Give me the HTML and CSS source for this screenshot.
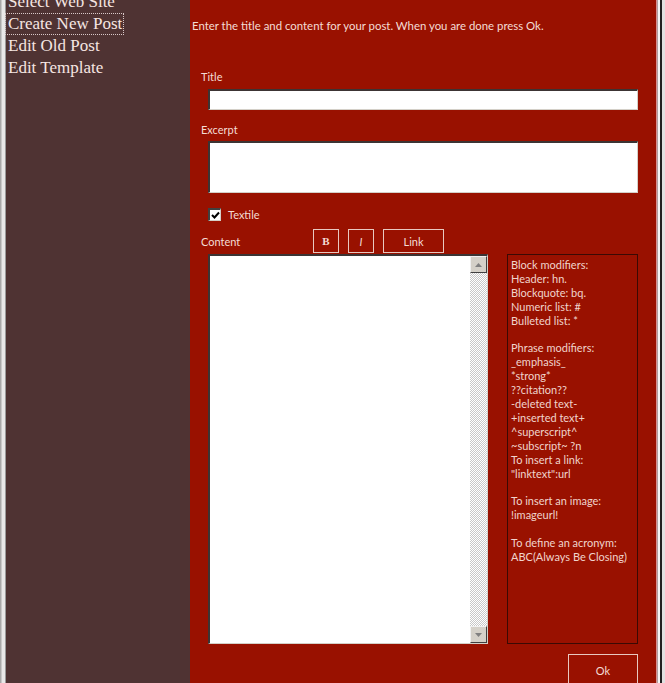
FILE: index.html
```html
<!DOCTYPE html>
<html>
<head>
<meta charset="utf-8">
<link rel="stylesheet" href="styles.css">
</head>
<body>
<div class="page">
  <div class="edge-left"></div>
  <nav class="sidebar">
    <a class="nav-item">Select Web Site</a>
    <a class="nav-item nav-focus">Create New Post</a>
    <a class="nav-item">Edit Old Post</a>
    <a class="nav-item">Edit Template</a>
  </nav>
  <main class="main">
    <p class="intro">Enter the title and content for your post. When you are done press Ok.</p>
    <div class="label label-title">Title</div>
    <div class="field field-title"></div>
    <div class="label label-excerpt">Excerpt</div>
    <div class="field field-excerpt"></div>
    <div class="check-row">
      <span class="checkbox"><svg width="9" height="9" viewBox="0 0 9 9"><path d="M1 4 L3.5 6.5 L8 1.5" fill="none" stroke="#000" stroke-width="2"/></svg></span>
      <span class="check-label">Textile</span>
    </div>
    <div class="toolbar">
      <div class="label label-content">Content</div>
      <div class="btn btn-b">B</div>
      <div class="btn btn-i">I</div>
      <div class="btn btn-link">Link</div>
    </div>
    <div class="editor">
      <div class="field field-content">
        <div class="scroll">
          <div class="sbtn"><svg width="7" height="4" viewBox="0 0 7 4"><path d="M0 4 L3.5 0 L7 4Z" fill="#808080"/></svg></div>
          <div class="track"></div>
          <div class="sbtn"><svg width="7" height="4" viewBox="0 0 7 4"><path d="M0 0 L3.5 4 L7 0Z" fill="#808080"/></svg></div>
        </div>
      </div>
      <div class="help">Block modifiers:<br>Header: hn.<br>Blockquote: bq.<br>Numeric list: #<br>Bulleted list: *<br><br>Phrase modifiers:<br>_emphasis_<br>*strong*<br>??citation??<br>-deleted text-<br>+inserted text+<br>^superscript^<br>~subscript~ ?n<br>To insert a link:<br>"linktext":url<br><br>To insert an image:<br>!imageurl!<br><br>To define an acronym:<br>ABC(Always Be Closing)</div>
    </div>
    <div class="actions"><div class="btn btn-ok">Ok</div></div>
  </main>
  <div class="edge-right"></div>
</div>
</body>
</html>
```
FILE: styles.css
```css
html, body { margin: 0; padding: 0; }
body { background: #fff; overflow: hidden; }
.page { display: flex; height: 683px; overflow: hidden; }
.edge-left {
  width: 6px; flex: none;
  background: linear-gradient(to right, #a8a8a8 0 1px, #c8c8c8 1px 2px, #e8e8e8 2px 5px, #9a9a9a 5px 6px);
}
.sidebar {
  width: 184px; flex: none; background: #4f3333;
  display: flex; flex-direction: column; align-items: flex-start;
}
.nav-item {
  display: block; flex: none; font-family: "Liberation Serif", serif; font-size: 17px;
  line-height: 20px; color: #f6e6e2; padding: 0 1px 0 2px; margin-bottom: 2px;
}
.nav-item:first-child { margin-top: -8px; }
.nav-focus { outline: 1px dotted #d8c8c8; }
.main {
  width: 466px; flex: none; background: #991100; color: #f4dcd4;
  font-family: Lato, "Open Sans", sans-serif; font-size: 11px;
  display: flex; flex-direction: column; padding: 0 18px;
  box-sizing: border-box;
}
.main > * { flex-shrink: 0; }
.intro { margin: 19px 0 0 -16px; line-height: 13px; font-size: 11.4px; }
.label { line-height: 13px; }
.label-title { margin: 38px 0 0 -7px; }
.field {
  background: #fff; box-sizing: border-box;
  border-top: 2px solid #3c3434; border-left: 2px solid #3c3434;
  border-right: 1px solid #d4d0c8; border-bottom: 1px solid #d4d0c8;
}
.field-title { height: 21px; margin-top: 6px; }
.label-excerpt { margin: 13px 0 0 -7px; }
.field-excerpt { height: 52px; margin-top: 5px; }
.check-row { display: flex; align-items: center; gap: 7px; margin-top: 15px; height: 13px; }
.checkbox {
  width: 13px; height: 13px; box-sizing: border-box; background: #fff;
  border-top: 2px solid #404040; border-left: 2px solid #404040;
  border-right: 1px solid #d4d0c8; border-bottom: 1px solid #d4d0c8;
  display: flex; align-items: center; justify-content: center;
}
.check-label { line-height: 13px; }
.toolbar { display: flex; align-items: center; margin-top: 8px; height: 24px; }
.label-content { margin-left: -7px; width: 112px; margin-top: 1px; }
.btn {
  box-sizing: border-box; border: 1px solid #e8c8c0; height: 24px;
  display: flex; align-items: center; justify-content: center; color: #f4dcd4;
}
.btn-b { width: 26px; font-family: "Liberation Serif", serif; font-weight: bold; font-size: 11px; }
.btn-i { width: 26px; margin-left: 9px; font-style: italic; }
.btn-link { width: 61px; margin-left: 9px; }
.editor { display: flex; gap: 19px; margin-top: 1px; height: 390px; }
.field-content { width: 280px; height: 390px; display: flex; justify-content: flex-end; }
.scroll { width: 17px; display: flex; flex-direction: column; }
.track {
  flex: 1;
  background: repeating-conic-gradient(#ffffff 0 25%, #c8c8c8 0 50%) 0 0 / 2px 2px;
}
.sbtn {
  height: 17px; flex: none; box-sizing: border-box; background: #d4d0c8;
  border-top: 1px solid #f0f0f0; border-left: 1px solid #f0f0f0;
  border-right: 1px solid #404040; border-bottom: 1px solid #404040;
  display: flex; align-items: center; justify-content: center;
}
.help {
  flex: 1; box-sizing: border-box; border: 1px solid #3a0a04;
  padding: 3px 3px 0 3px; line-height: 13.9px; font-size: 11px; color: #f0d4cc;
}
.actions { display: flex; justify-content: flex-end; margin-top: 10px; }
.btn-ok { width: 70px; height: 32px; }
.edge-right {
  flex: 1;
  background: linear-gradient(to right, #d89090 0 1px, #b0a0a0 1px 2px, #f4f4f4 2px 4px, #202020 4px 6px, #e0e0e0 6px 9px);
}
```
